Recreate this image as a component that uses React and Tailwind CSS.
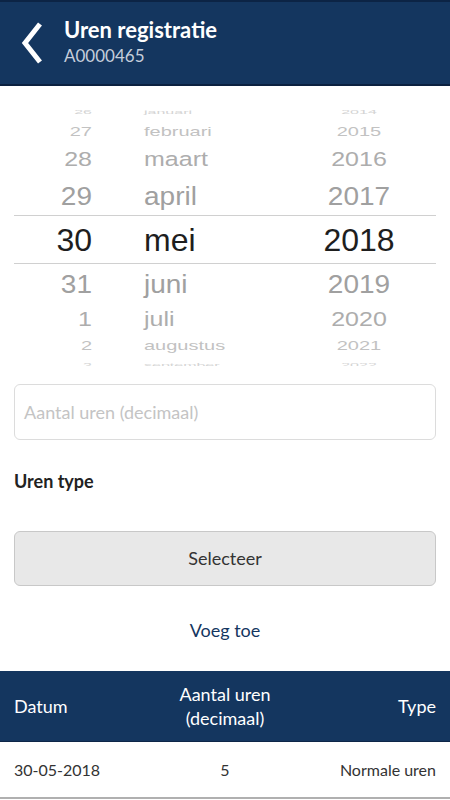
import React from "react";

const rows = [
  { d: "26", m: "januari", y: "2014", h: "h-[17px]", size: "text-[16px]", sy: "scale-y-[0.35]", c: "text-[#d4d4d4]", cls: "items-start" },
  { d: "27", m: "februari", y: "2015", h: "h-[22px]", size: "text-[20px]", sy: "scale-y-[0.6]", c: "text-[#c2c2c2]", cls: "items-center" },
  { d: "28", m: "maart", y: "2016", h: "h-[33px]", size: "text-[25px]", sy: "scale-y-[0.82]", c: "text-[#adadad]", cls: "items-center" },
  { d: "29", m: "april", y: "2017", h: "h-[39px]", size: "text-[28px]", sy: "scale-y-[0.95]", c: "text-[#a0a0a0]", cls: "items-center" },
  { d: "30", m: "mei", y: "2018", h: "h-[49px]", size: "text-[32px]", sy: "scale-y-100", c: "text-[#1e1e1e]", cls: "items-center" },
  { d: "31", m: "juni", y: "2019", h: "h-[39px]", size: "text-[28px]", sy: "scale-y-[0.95]", c: "text-[#a0a0a0]", cls: "items-center" },
  { d: "1", m: "juli", y: "2020", h: "h-[32px]", size: "text-[25px]", sy: "scale-y-[0.82]", c: "text-[#adadad]", cls: "items-center" },
  { d: "2", m: "augustus", y: "2021", h: "h-[22px]", size: "text-[20px]", sy: "scale-y-[0.6]", c: "text-[#c2c2c2]", cls: "items-center" },
  { d: "3", m: "september", y: "2022", h: "h-[17px]", size: "text-[16px]", sy: "scale-y-[0.35]", c: "text-[#d4d4d4]", cls: "items-start" },
];

function PickerRow({ r, selected }) {
  return (
    <div
      className={`flex shrink-0 ${r.cls} ${r.h} ${r.size} ${r.c} leading-none ${
        selected ? "border-y border-[#d0d0d0]" : ""
      }`}
    >
      <div className={`flex w-full ${r.sy}`}>
        <span className="w-[78px] text-right">{r.d}</span>
        <span className="ml-[52px] w-[140px]">{r.m}</span>
        <span className="w-[150px] text-center">{r.y}</span>
      </div>
    </div>
  );
}

export default function App() {
  return (
    <div className="w-[450px] h-[800px] bg-white overflow-hidden font-['Lato',sans-serif]">
      {/* header */}
      <div className="h-[86px] bg-[#14365f] border-t-2 border-[#0c2445] border-b-2 border-b-[#0b2140] flex items-center">
        <svg width="24" height="44" viewBox="0 0 24 44" className="ml-[20px]">
          <path d="M20 3 L5 22 L20 41" fill="none" stroke="white" strokeWidth="5" />
        </svg>
        <div className="ml-[20px] -mt-[2px]">
          <div className="text-white text-[22px] font-bold leading-[28px]">Uren registratie</div>
          <div className="text-[#c5cedb] text-[17px] leading-[24px]">A0000465</div>
        </div>
      </div>

      {/* date picker */}
      <div className="mx-[14px] mt-[18px] h-[262px] overflow-hidden font-['Liberation_Sans',sans-serif] flex flex-col">
        {rows.map((r, i) => (
          <PickerRow key={i} r={r} selected={i === 4} />
        ))}
      </div>

      {/* form */}
      <div className="px-[14px] pt-[18px]">
        <div className="h-[56px] border border-[#dcdcdc] rounded-[6px] flex items-center px-[9px] text-[18px] text-[#c4c4c4]">
          Aantal uren (decimaal)
        </div>
        <div className="mt-[28px] text-[18px] font-bold text-[#222]">Uren type</div>
        <div className="mt-[36px] h-[55px] bg-[#e8e8e8] border border-[#c8c8c8] rounded-[6px] flex items-center justify-center text-[18px] text-[#333]">
          Selecteer
        </div>
        <div className="mt-[31px] text-center text-[18px] text-[#14365f]">Voeg toe</div>
      </div>

      {/* table */}
      <div className="mt-[27px]">
        <div className="h-[71px] bg-[#14365f] border-b border-[#0d2648] grid grid-cols-3 items-center px-[14px] text-white text-[18px] leading-[24px]">
          <div>Datum</div>
          <div className="text-center">
            Aantal uren
            <br />
            (decimaal)
          </div>
          <div className="text-right">Type</div>
        </div>
        <div className="h-[57px] border-b-2 border-[#b0b0b0] grid grid-cols-3 items-center px-[14px] text-[#333] text-[16px]">
          <div>30-05-2018</div>
          <div className="text-center">5</div>
          <div className="text-right">Normale uren</div>
        </div>
      </div>
    </div>
  );
}
